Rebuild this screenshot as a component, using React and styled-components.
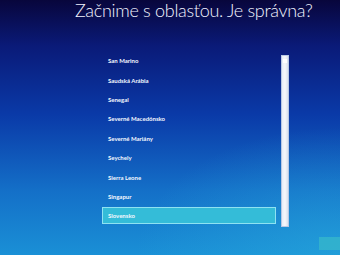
import React from 'react';
import styled, { createGlobalStyle } from 'styled-components';

const regions = [
  'San Marino',
  'Saudská Arábia',
  'Senegal',
  'Severné Macedónsko',
  'Severné Mariány',
  'Seychely',
  'Sierra Leone',
  'Singapur',
  'Slovensko',
];

const Global = createGlobalStyle`
  html, body {
    margin: 0;
    padding: 0;
    overflow: hidden;
  }
`;

const App = () => {
  return (
    <Screen>
      <Global />
      <Title>Začnime s oblasťou. Je správna?</Title>
      <Body>
        <List>
          {regions.map((name) => (
            <Row key={name}>
              <Item selected={name === 'Slovensko'}>{name}</Item>
            </Row>
          ))}
        </List>
        <Scrollbar>
          <ScrollCap />
        </Scrollbar>
      </Body>
      <Footer>
        <NextButton />
      </Footer>
    </Screen>
  );
};

const Screen = styled.div`
  width: 340px;
  height: 255px;
  display: flex;
  flex-direction: column;
  font-family: Lato, 'Liberation Sans', sans-serif;
  color: #fff;
  background:
    radial-gradient(ellipse 60% 50% at 100% 100%, rgba(40, 170, 220, 0.55), transparent),
    linear-gradient(180deg, #08063c 0%, #0a1a78 18%, #0a3aa8 45%, #1470c8 75%, #1a90d6 100%);
  overflow: hidden;
`;

const Title = styled.h1`
  margin: 0 0 0 75px;
  font-size: 18px;
  font-weight: 300;
  line-height: 20px;
  letter-spacing: -0.3px;
  white-space: nowrap;
  color: #f2f4ff;
`;

const Body = styled.div`
  display: flex;
  align-items: flex-start;
  margin-top: 31px;
  padding-left: 102px;
  gap: 5px;
`;

const List = styled.ul`
  list-style: none;
  margin: 0;
  padding: 0;
  width: 174px;
`;

const Row = styled.li`
  height: 19.4px;
  display: flex;
  align-items: center;
`;

const Item = styled.div`
  flex: 1;
  height: 17px;
  display: flex;
  align-items: center;
  padding-left: 5px;
  box-sizing: border-box;
  font-size: 6px;
  font-weight: 700;
  color: #f4f8ff;
  background: ${(p) => (p.selected ? '#34bcd8' : 'transparent')};
  border: 1px solid ${(p) => (p.selected ? '#8ee2f2' : 'transparent')};
`;

const Scrollbar = styled.div`
  margin-top: 4px;
  width: 8px;
  height: 172px;
  box-sizing: border-box;
  background: linear-gradient(90deg, #e6ecf6, #f6f8fc 50%, #d8e0ec);
  border: 1px solid #b8c8e4;
  display: flex;
  justify-content: center;
`;

const ScrollCap = styled.div`
  margin-top: 3px;
  width: 4px;
  height: 4px;
  background: #ffffff;
`;

const Footer = styled.div`
  margin-top: auto;
  margin-bottom: 5px;
  display: flex;
  justify-content: flex-end;
`;

const NextButton = styled.div`
  width: 21px;
  height: 13px;
  background: #34b4cc;
  opacity: 0.85;
`;

export default App;
